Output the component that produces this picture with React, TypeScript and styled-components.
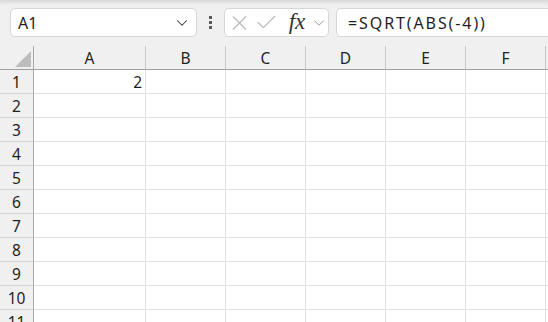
import React from 'react';
import styled, { createGlobalStyle } from 'styled-components';
import { ChevronDown, X, Check } from 'lucide-react';

const GlobalStyle = createGlobalStyle`
  html, body {
    margin: 0;
    padding: 0;
    background: #ffffff;
    overflow: hidden;
  }
  body {
    font-family: "Segoe UI", "Noto Sans", "Open Sans", sans-serif;
  }
`;

const COLUMNS = ['A', 'B', 'C', 'D', 'E', 'F', 'G'];
const COL_WIDTHS = [112, 80, 80, 80, 80, 80, 80];
const ROWS = 11;

const Page = styled.div`
  width: 548px;
  height: 322px;
  overflow: hidden;
  background: #fff;
`;

const Bar = styled.div`
  display: flex;
  align-items: flex-start;
  height: 46px;
  padding: 8px 0 0 10px;
  box-sizing: border-box;
  background: #f0f0f0;
  box-shadow: inset 0 5px 4px -3px rgba(0, 0, 0, 0.12);
`;

const NameBox = styled.div`
  display: flex;
  align-items: center;
  justify-content: space-between;
  width: 187px;
  height: 29px;
  box-sizing: border-box;
  padding: 0 5px 0 7px;
  background: #fff;
  border: 1px solid #d6d6d6;
  border-radius: 5px;
  font-size: 16px;
  color: #1f1f1f;
`;

const Grip = styled.div`
  width: 27px;
  height: 29px;
  display: flex;
  flex-direction: column;
  align-items: center;
  justify-content: center;
  gap: 2px;
`;

const GripDot = styled.span`
  width: 3px;
  height: 3px;
  background: #5a5a5a;
`;

const FxBox = styled.div`
  display: flex;
  align-items: center;
  width: 105px;
  height: 29px;
  box-sizing: border-box;
  padding-left: 2px;
  background: #fff;
  border: 1px solid #d6d6d6;
  border-radius: 5px;
  color: #b8b8b8;
`;

const IconSlot = styled.span<{ $w: number }>`
  display: flex;
  align-items: center;
  justify-content: center;
  width: ${(p) => p.$w}px;
`;

const FxLabel = styled.span`
  font-family: "Liberation Serif", "DejaVu Serif", serif;
  font-style: italic;
  font-size: 23px;
  color: #333;
  width: 26px;
  margin-left: 4px;
  text-align: center;
  line-height: 1;
  margin-top: -3px;
`;

const FormulaInput = styled.div`
  display: flex;
  align-items: center;
  flex: 1;
  height: 29px;
  margin-left: 7px;
  margin-right: -12px;
  padding-left: 11px;
  box-sizing: border-box;
  background: #fff;
  border: 1px solid #d6d6d6;
  border-radius: 5px;
  font-size: 16px;
  letter-spacing: 1.9px;
  color: #1f1f1f;
`;

const Grid = styled.div`
  display: grid;
  grid-template-columns: 34px ${COL_WIDTHS.map((w) => `${w}px`).join(' ')};
  grid-auto-rows: 24px;
`;

const Corner = styled.div`
  position: relative;
  background: #f0f0f0;
  border-right: 1px solid #a9a9a9;
  border-bottom: 1px solid #a0a0a0;
  box-sizing: border-box;
`;

const ColHead = styled.div`
  display: flex;
  align-items: center;
  justify-content: center;
  background: #f0f0f0;
  border-right: 1px solid #c8c8c8;
  border-bottom: 1px solid #a0a0a0;
  box-sizing: border-box;
  font-size: 15.5px;
  color: #1f1f1f;
`;

const RowHead = styled.div`
  display: flex;
  align-items: center;
  justify-content: center;
  background: #f0f0f0;
  border-right: 1px solid #a9a9a9;
  border-bottom: 1px solid #d4d4d4;
  box-sizing: border-box;
  font-size: 15.5px;
  color: #1f1f1f;
`;

const Cell = styled.div<{ $num?: boolean }>`
  display: flex;
  align-items: center;
  justify-content: ${(p) => (p.$num ? 'flex-end' : 'flex-start')};
  padding: 0 3px;
  border-right: 1px solid #e1e1e1;
  border-bottom: 1px solid #e1e1e1;
  box-sizing: border-box;
  font-size: 15.5px;
  color: #1f1f1f;
`;

const cellValues: Record<string, string> = { A1: '2' };

export default function App() {
  return (
    <Page>
      <GlobalStyle />
      <Bar>
        <NameBox>
          <span>A1</span>
          <ChevronDown size={18} strokeWidth={1.4} color="#333" />
        </NameBox>
        <Grip>
          <GripDot />
          <GripDot />
          <GripDot />
        </Grip>
        <FxBox>
          <IconSlot $w={25}>
            <X size={26} strokeWidth={1.1} />
          </IconSlot>
          <IconSlot $w={28}>
            <Check size={25} strokeWidth={1.1} />
          </IconSlot>
          <FxLabel>fx</FxLabel>
          <IconSlot $w={18}>
            <ChevronDown size={18} strokeWidth={1.3} color="#9a9a9a" />
          </IconSlot>
        </FxBox>
        <FormulaInput>=SQRT(ABS(-4))</FormulaInput>
      </Bar>
      <Grid>
        <Corner>
          <svg width="33" height="23" style={{ position: 'absolute', left: 0, top: 0 }}>
            <polygon points="31,5 31,21 15,21" fill="#bdbdbd" />
          </svg>
        </Corner>
        {COLUMNS.map((c) => (
          <ColHead key={c}>{c === 'G' ? '' : c}</ColHead>
        ))}
        {Array.from({ length: ROWS }, (_, i) => (
          <React.Fragment key={i}>
            <RowHead>{i + 1}</RowHead>
            {COLUMNS.map((c) => {
              const v = cellValues[`${c}${i + 1}`];
              return (
                <Cell key={c} $num={!!v}>
                  {v}
                </Cell>
              );
            })}
          </React.Fragment>
        ))}
      </Grid>
    </Page>
  );
}
